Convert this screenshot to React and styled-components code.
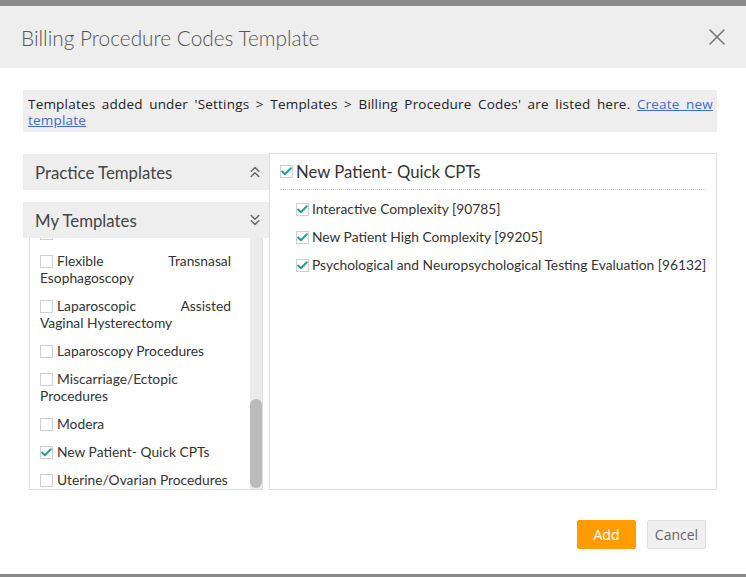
import React from "react"
import styled, { createGlobalStyle } from "styled-components"
import { ChevronsUp, ChevronsDown, X, Check } from "lucide-react"

const GlobalStyle = createGlobalStyle`
  html, body {
    margin: 0;
    padding: 0;
    background: #8a8a8a;
    font-family: Lato, "Open Sans", sans-serif;
  }
  * { box-sizing: border-box; }
`

const Modal = styled.div`
  margin-top: 6px;
  height: 568px;
  background: #fff;
  display: flex;
  flex-direction: column;
`

const Header = styled.div`
  height: 62px;
  flex-shrink: 0;
  background: #eeeeee;
  display: flex;
  align-items: center;
  justify-content: space-between;
  padding: 0 22px 0 21px;
`

const Title = styled.h1`
  margin: 0;
  font-family: Lato, sans-serif;
  font-weight: 300;
  font-size: 20.8px;
  color: #555;
`

const CloseButton = styled.button`
  border: none;
  background: none;
  padding: 0;
  margin-right: -7px;
  display: flex;
  color: #777;
  cursor: pointer;
`

const Body = styled.div`
  padding: 22px 29px 0 23px;
`

const Banner = styled.div`
  background: #eeeeee;
  padding: 6px 4px 4px 5px;
  font-family: "Open Sans", sans-serif;
  font-size: 13.5px;
  letter-spacing: 0.2px;
  line-height: 16px;
  color: #222;
  text-align: justify;

  a {
    color: #4169d8;
    text-decoration: underline;
  }
`

const Columns = styled.div`
  margin-top: 21px;
  display: grid;
  grid-template-columns: 246px 1fr;
  height: 336px;
`

const LeftCol = styled.div`
  display: flex;
  flex-direction: column;
  padding-top: 1px;
`

const AccordionHeader = styled.div`
  height: 36px;
  flex-shrink: 0;
  background: #eeeeee;
  display: flex;
  align-items: center;
  justify-content: space-between;
  padding: 0 5px 0 12px;
  margin-bottom: ${(p) => (p.$open ? "0" : "12px")};
  font-size: 16.8px;
  color: #444;
  svg { color: #666; }
`

const ListBox = styled.div`
  margin: 0 6px;
  height: 252px;
  border: 1px solid #dddddd;
  border-top: none;
  display: flex;
`

const ListViewport = styled.div`
  flex: 1;
  overflow: hidden;
  display: flex;
  flex-direction: column;
  justify-content: flex-end;
  padding: 0 19px 1px 10px;
`

const ScrollTrack = styled.div`
  width: 12px;
  flex-shrink: 0;
  background: #ebebeb;
  display: flex;
  flex-direction: column;
  justify-content: flex-end;
  padding-bottom: 1px;
`

const ScrollThumb = styled.div`
  height: 89px;
  border-radius: 6px;
  background: #bbbbbb;
`

const ListItem = styled.label`
  display: block;
  flex-shrink: 0;
  margin-top: 11px;
  font-size: 13.8px;
  line-height: 17px;
  color: #333;
  text-align: justify;
`

const Box = styled.span`
  display: inline-flex;
  align-items: center;
  justify-content: center;
  width: 13px;
  height: 13px;
  border: 1px solid #cfcfcf;
  background: #fff;
  vertical-align: -2px;
  margin-right: ${(p) => p.$gap || 4}px;
  color: #1f9e9a;
  overflow: visible;
`

const RightPanel = styled.div`
  border: 1px solid #dddddd;
  padding: 0 10px;
`

const GroupHeader = styled.div`
  height: 36px;
  display: flex;
  align-items: center;
  border-bottom: 1px dotted #c8c8c8;
  font-size: 16.7px;
  color: #333;
`

const CodeList = styled.div`
  padding: 0 0 0 16px;
`

const CodeItem = styled.div`
  margin-top: ${(p) => (p.$first ? 10 : 11)}px;
  font-size: 13.8px;
  line-height: 17px;
  color: #333;
  white-space: nowrap;
`

const Footer = styled.div`
  display: flex;
  justify-content: flex-end;
  gap: 11px;
  padding: 31px 40px 0 0;
`

const Button = styled.button`
  height: 29px;
  width: 59px;
  border-radius: 2px;
  font-family: "Open Sans", sans-serif;
  font-size: 14px;
  cursor: pointer;
  border: 1px solid ${(p) => (p.$primary ? "#ff9c00" : "#dddddd")};
  background: ${(p) => (p.$primary ? "#ff9c00" : "#f0f0f0")};
  color: ${(p) => (p.$primary ? "#fff" : "#666")};
`

const Checkbox = ({ checked, gap }) => (
  <Box $gap={gap}>{checked && <Check size={13} strokeWidth={3.6} style={{ flexShrink: 0 }} />}</Box>
)

// list is shown scrolled to its end, so earlier entries sit above the viewport
const templates = [
  { name: "Endometrial Biopsy" },
  { name: "Essure Procedures" },
  { name: "Fetal Monitoring" },
  { name: "Fibroid Procedures" },
  { name: "Flexible Transnasal Esophagoscopy" },
  { name: "Laparoscopic Assisted Vaginal Hysterectomy" },
  { name: "Laparoscopy Procedures" },
  { name: "Miscarriage/Ectopic Procedures" },
  { name: "Modera" },
  { name: "New Patient- Quick CPTs", checked: true },
  { name: "Uterine/Ovarian Procedures" }
]

const codes = [
  "Interactive Complexity [90785]",
  "New Patient High Complexity [99205]",
  "Psychological and Neuropsychological Testing Evaluation [96132]"
]

export default function App() {
  return (
    <>
      <GlobalStyle />
      <Modal>
        <Header>
          <Title>Billing Procedure Codes Template</Title>
          <CloseButton aria-label="Close">
            <X size={28} strokeWidth={1.3} />
          </CloseButton>
        </Header>
        <Body>
          <Banner>
            Templates added under 'Settings &gt; Templates &gt; Billing Procedure Codes' are listed here. <a href="#">Create new template</a>
          </Banner>
          <Columns>
            <LeftCol>
              <AccordionHeader>
                Practice Templates
                <ChevronsUp size={18} strokeWidth={2} />
              </AccordionHeader>
              <AccordionHeader $open>
                My Templates
                <ChevronsDown size={18} strokeWidth={2} />
              </AccordionHeader>
              <ListBox>
                <ListViewport>
                  {templates.map((t) => (
                    <ListItem key={t.name}>
                      <Checkbox checked={t.checked} />
                      {t.name}
                    </ListItem>
                  ))}
                </ListViewport>
                <ScrollTrack>
                  <ScrollThumb />
                </ScrollTrack>
              </ListBox>
            </LeftCol>
            <RightPanel>
              <GroupHeader>
                <Checkbox checked gap={3} />
                New Patient- Quick CPTs
              </GroupHeader>
              <CodeList>
                {codes.map((c, i) => (
                  <CodeItem key={c} $first={i === 0}>
                    <Checkbox checked gap={3} />
                    {c}
                  </CodeItem>
                ))}
              </CodeList>
            </RightPanel>
          </Columns>
        </Body>
        <Footer>
          <Button $primary>Add</Button>
          <Button>Cancel</Button>
        </Footer>
      </Modal>
    </>
  )
}
